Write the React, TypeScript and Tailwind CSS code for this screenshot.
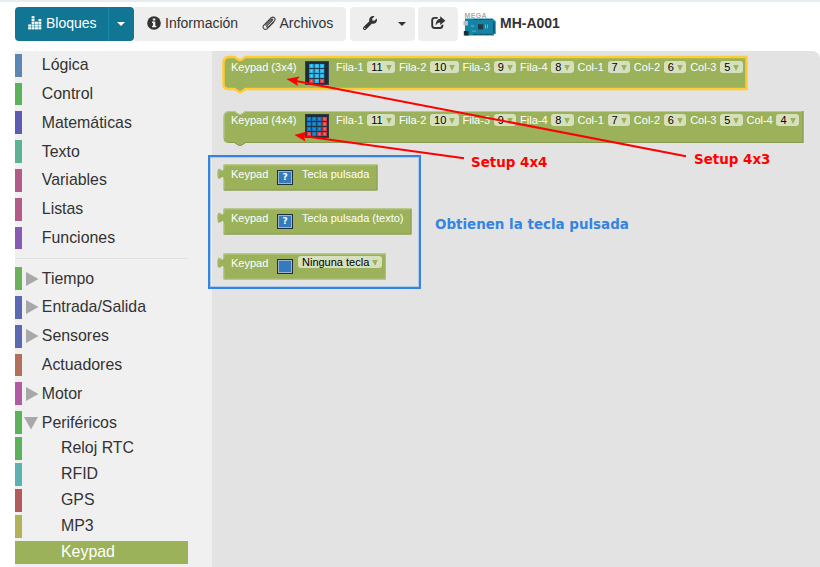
import React from "react";
import { FaWrench } from "react-icons/fa";

type Category = { name: string; color: string; arrow?: "right" | "down" };

const basics: Category[] = [
  { name: "Lógica", color: "#5b87b2" },
  { name: "Control", color: "#5bb25b" },
  { name: "Matemáticas", color: "#5b5bb2" },
  { name: "Texto", color: "#5bb296" },
  { name: "Variables", color: "#b25b87" },
  { name: "Listas", color: "#b25b87" },
  { name: "Funciones", color: "#875bb2" },
];

const devices: Category[] = [
  { name: "Tiempo", color: "#69b25b", arrow: "right" },
  { name: "Entrada/Salida", color: "#5b69b2", arrow: "right" },
  { name: "Sensores", color: "#5b69b2", arrow: "right" },
  { name: "Actuadores", color: "#b2705b" },
  { name: "Motor", color: "#b25ba3", arrow: "right" },
  { name: "Periféricos", color: "#5bb25b", arrow: "down" },
];

const peripherals: Category[] = [
  { name: "Reloj RTC", color: "#5bb25b" },
  { name: "RFID", color: "#5bb2b2" },
  { name: "GPS", color: "#b25b5b" },
  { name: "MP3", color: "#b2b25b" },
];

const pins: [string, string][] = [
  ["Fila-1", "11"],
  ["Fila-2", "10"],
  ["Fila-3", "9"],
  ["Fila-4", "8"],
  ["Col-1", "7"],
  ["Col-2", "6"],
  ["Col-3", "5"],
  ["Col-4", "4"],
];

function CategoryRow({ item }: { item: Category }) {
  return (
    <div className="mb-[6px] flex h-[22.8px] items-center">
      <span className="h-full w-[7px]" style={{ backgroundColor: item.color }} />
      <span className="flex w-[19.8px] justify-start pl-[2px]">
        {item.arrow === "right" && (
          <svg width="14" height="14" viewBox="0 0 14 14" className="ml-[2px]"><path d="M0 0L12.5 7L0 14Z" fill="#a8a8a8" /></svg>
        )}
        {item.arrow === "down" && (
          <svg width="14" height="14" viewBox="0 0 14 14"><path d="M0 1H14L7 13.5Z" fill="#a8a8a8" /></svg>
        )}
      </span>
      <span className="leading-[22px]">{item.name}</span>
    </div>
  );
}

function SubRow({ item }: { item: Category }) {
  return (
    <div className="mb-[3.2px] flex h-[22.8px] items-center">
      <span className="h-full w-[7px]" style={{ backgroundColor: item.color }} />
      <span className="pl-[39px] leading-[22px]">{item.name}</span>
    </div>
  );
}

function Caret({ light = false }: { light?: boolean }) {
  return (
    <svg width="8" height="4" viewBox="0 0 8 4"><path d="M0 0H8L4 4Z" fill={light ? "#fff" : "#333"} /></svg>
  );
}

function StatsIcon() {
  const levels = [2, 5, 3, 4];
  return (
    <svg width="14" height="14" viewBox="0 0 14 14" fill="#fff">
      {levels.map((n, c) =>
        Array.from({ length: n }, (_, r) => (
          <rect key={`${c}-${r}`} x={0.2 + c * 3.4} y={11.2 - r * 2.75} width="2.9" height="2.2" />
        ))
      )}
    </svg>
  );
}

function InfoIcon() {
  return (
    <svg width="14" height="14" viewBox="0 0 14 14">
      <circle cx="7" cy="7" r="6.8" fill="#333" />
      <path d="M5.8 2.5H8.3V4.5H5.8ZM5 5.6H8.3V9.8H9.3V11.3H5V9.8H6V7H5Z" fill="#eee" />
    </svg>
  );
}

function ClipIcon() {
  return (
    <svg width="15" height="15" viewBox="0 0 15 15" fill="none" stroke="#444" strokeWidth="1.15" strokeLinecap="round">
      <path d="M9.6 5L5 9.6C4.1 10.6 5.4 11.8 6.4 10.8L12.2 5.2C14.6 2.9 11.6 -.3 9.1 2L2.1 8.8C-.6 11.6 2.8 15 5.6 12.4L11.6 6.4" />
      <path d="M9.6 5C10.3 4.3 11 3.6 10.6 3.2C10 2.6 9.3 3.2 8.6 3.9L3.6 8.9" />
    </svg>
  );
}

function ShareIcon() {
  return (
    <svg width="15" height="14" viewBox="0 0 15 14">
      <path d="M6.7 1.9H3.6Q1.2 1.9 1.2 4.2V9.6Q1.2 12 3.6 12H9Q11.4 12 11.4 9.6V8.8" fill="none" stroke="#333" strokeWidth="1.9" />
      <path d="M9.2 .2L14.4 4.7L9.2 9V6.5Q6.2 6.4 4.7 9.5Q4.7 3.2 9.2 2.8Z" fill="#333" />
    </svg>
  );
}

function BoardIcon() {
  return (
    <svg width="34" height="26" viewBox="0 0 34 26" className="-mt-px">
      <text x="1.5" y="7" fontFamily="Liberation Sans, sans-serif" fontSize="7" fontWeight="bold" fill="#aaa" textLength="22">MEGA</text>
      <path d="M2 7.5H30L31 9L32.7 10V23H31V24.5H2Z" fill="#1583a5" />
      <path d="M10 8.5H29M10 23.4H29" stroke="#14586f" strokeWidth="1.2" strokeDasharray="5 .7" />
      <rect x="30" y="11" width="1.6" height="11" fill="#145268" />
      <rect x="0.5" y="10" width="4.5" height="4.5" fill="#b8bec0" />
      <rect x="0.8" y="20" width="4.8" height="4.5" fill="#183037" />
      <rect x="15" y="13.2" width="5.2" height="5.2" fill="#263a40" />
      <rect x="8" y="14" width="3" height="2" fill="#3ca4bb" />
      <path d="M22.5 13.5V17.5M24.5 13.5V17.5" stroke="#7cc4d6" strokeWidth=".8" />
      <rect x="9" y="19.5" width="4" height="1.2" fill="#4aabc0" />
    </svg>
  );
}

function KeypadIcon({ columns }: { columns: 3 | 4 }) {
  return (
    <svg width="24" height="24" viewBox="0 0 24 24" className="shrink-0">
      <rect width="24" height="24" fill={columns === 3 ? "#2f4350" : "#333842"} />
      <rect x="1.2" y="1.2" width="21.6" height="21.6" fill="#1b2a35" />
      {Array.from({ length: 4 * columns }, (_, i) => {
        const c = i % columns;
        const r = Math.floor(i / columns);
        const red = columns === 3 ? r === 3 && c !== 1 : c === 3 || (r === 3 && c !== 1);
        const x = columns === 3 ? 4.2 + c * 5.3 : 1.8 + c * 5.2;
        const y = 2.9 + r * 5;
        const core = red ? "#f1898d" : columns === 3 ? "#7ed5f2" : "#3f9bd0";
        return (
          <g key={i}>
            <rect x={x} y={y} width="4.5" height="4.2" fill={red ? "#e23d45" : columns === 3 ? "#23b4ec" : "#1476b8"} />
            <rect x={x + 1.5} y={y + 1.3} width="1.5" height="1.5" fill={core} />
          </g>
        );
      })}
    </svg>
  );
}

function KeyIcon({ question = false }: { question?: boolean }) {
  return (
    <span className="flex h-[15px] w-4 shrink-0 items-center justify-center border-[1.5px] border-[#222d38] bg-[#9db6cf] p-px">
      <span className="flex h-full w-full items-center justify-center bg-[#357abd] font-['DejaVu_Sans'] text-[9px] leading-none font-bold text-white">
        {question ? "?" : ""}
      </span>
    </span>
  );
}

function Dropdown({ value }: { value: string }) {
  return (
    <span className="-mt-px flex h-3 items-center gap-[3px] rounded-[3px] bg-[#d7e0be] pr-[3.5px] pl-1 text-black">
      <span className="pt-px">{value}</span>
      <svg width="6" height="6" viewBox="0 0 6 6" className="mt-px"><path d="M.2 0H5.8L3 6Z" fill="#9bb25b" /></svg>
    </span>
  );
}

function SetupBlock({ columns }: { columns: 3 | 4 }) {
  const selected = columns === 3;
  const right = selected ? 524.5 : 581.5;
  const outline = `M1.5 8Q1.5 2 7.5 2H12.5L17 5H19L23.5 2H${right}V34H23.5L19 37H17L12.5 34H6.5Q1.5 34 1.5 29Z`;
  return (
    <div className={selected ? "absolute top-[55px] left-[222px] h-[39px] w-[528px]" : "absolute top-[109px] left-[222px] h-[39px] w-[586px]"}>
      <svg className="absolute inset-0" width={right + 3} height="39">
        <path d={outline} fill="#9bb25b" stroke={selected ? "#fc3" : "none"} strokeWidth="2.5" />
        {!selected && (
          <path d={`M2 29V8Q2 2.5 7.5 2.5H12.5L17 5.5H19L23.5 2.5H${right - 1}`} fill="none" stroke="#b9c98c" />
        )}
        {!selected && <path d={`M${right - 0.5} 2V33.5H23.5L19 36.5H17L12.5 33.5H6.5`} fill="none" stroke="#87994f" />}
      </svg>
      <div className={selected ? "relative flex items-start gap-[3.7px] pt-[6px] pl-[9px]" : "relative flex items-start gap-[3.7px] pt-[5px] pl-[9px]"}>
        <span className="w-[70px] leading-[13px]">Keypad ({columns === 3 ? "3x4" : "4x4"})</span>
        <span className="mr-[3.7px]"><KeypadIcon columns={columns} /></span>
        {pins.slice(0, selected ? 7 : 8).map(([label, value]) => (
          <span key={label} className="flex h-[13px] items-center gap-[3.7px]">
            <span>{label}</span>
            <Dropdown value={value} />
          </span>
        ))}
      </div>
    </div>
  );
}

function ValueBlock({ width, label, top, field }: { width: number; label: string; top: number; field?: boolean }) {
  return (
    <div className="absolute left-[217px] h-[28px]" style={{ top, width: width + 8 }}>
      <svg className="absolute inset-0" width={width + 8} height="28">
        <path d={`M6.5 .5V4.2C6.5 11.7 .5 -1.8 .5 9.8S6.5 7.9 6.5 15.4V26.5H${width + 6}V.5Z`} fill="#9bb25b" />
        <path d={`M7 26V15.5M1 12C.5 9 .7 6 3 6Q6.8 7.5 7 4V1H${width + 5.5}`} fill="none" stroke="#b5c681" />
        <path d={`M${width + 5.5} 1V26H7`} fill="none" stroke={field ? "#b0bf80" : "#889b51"} />
      </svg>
      <div className="relative flex items-start pt-[4px] pl-[14px]">
        <span className="w-[46px] leading-[13px]">Keypad</span>
        <span className="pt-[2px]"><KeyIcon question={!field} /></span>
        <span className={field ? "ml-[5px] whitespace-nowrap" : "ml-[9px] leading-[13px] whitespace-nowrap"}>
          {field ? <Dropdown value={label} /> : label}
        </span>
      </div>
    </div>
  );
}

export default function App() {
  return (
    <div className="relative flex h-[567px] w-[820px] flex-col overflow-hidden bg-white font-['Liberation_Sans',Arial,sans-serif] text-[#333]">
      <header className="flex h-[51px] shrink-0 items-start border-t-2 border-[#e6eef1] pt-[5px] pl-[15px] text-[14px]">
        <div className="flex h-[34px] w-[119px] shrink-0 rounded bg-[#117594] text-white">
          <button className="flex w-[94px] items-center gap-[4px] border-r border-[#1688aa] pb-[2px] pl-[13px]">
            <StatsIcon />
            Bloques
          </button>
          <button className="flex w-[24px] items-center justify-center"><Caret light /></button>
        </div>
        <div className="flex h-[34px] w-[212px] shrink-0 items-center rounded-r bg-[#eee] pb-[2px] pl-[13px]">
          <InfoIcon />
          <span className="ml-1 w-[97px]">Información</span>
          <ClipIcon />
          <span className="ml-[2.5px]">Archivos</span>
        </div>
        <div className="ml-1 flex h-[34px] w-[65px] shrink-0 items-center rounded bg-[#eee] pl-[13px]">
          <FaWrench size={14} color="#333" className="mb-[3px]" />
          <span className="ml-[21px]"><Caret /></span>
        </div>
        <div className="ml-[3px] flex h-[34px] w-10 shrink-0 items-center justify-center rounded bg-[#eee] pb-[3px]"><ShareIcon /></div>
        <div className="ml-[5px] flex h-[34px] items-center gap-[3px]">
          <BoardIcon />
          <span className="pb-[2px] font-bold">MH-A001</span>
        </div>
      </header>

      <main className="flex h-[516px] pl-[15px]">
        <aside className="w-[197px] shrink-0 bg-[#f0f0f0] pt-[2.85px] text-[15.9px]">
          {basics.map((item) => <CategoryRow key={item.name} item={item} />)}
          <div className="mt-[8.55px] mb-[8.2px] h-px w-[173px] bg-[#e2e2e2]" />
          {devices.map((item) => <CategoryRow key={item.name} item={item} />)}
          <div className="-mt-[3.2px]">
            {peripherals.map((item) => <SubRow key={item.name} item={item} />)}
            <div className="h-[23px] w-[173px] bg-[#9bb25b] pl-[46px] leading-[22px] text-white">Keypad</div>
          </div>
        </aside>
        <section className="flex-1 rounded-tr-lg bg-[#e3e3e3] text-[11px] leading-[13px] text-white">
          <SetupBlock columns={3} />
          <SetupBlock columns={4} />
          <ValueBlock top={164} width={154.5} label="Tecla pulsada" />
          <ValueBlock top={208} width={188.5} label="Tecla pulsada (texto)" />
          <ValueBlock top={253} width={163} label="Ninguna tecla" field />
        </section>
      </main>

      <div className="absolute top-[155px] left-[208px] h-[134px] w-[213px] border-2 border-[#3584e4] shadow-[inset_0_0_0_1px_#b0caea]" />
      <svg className="absolute inset-0" width="820" height="567" fill="none" stroke="#f00" strokeWidth="2">
        <path d="M686 156.2L296 81M464 158.2L303 136" />
        <g fill="#f00" stroke="none">
          <path d="M286.5 79L299.5 76.5L296.5 81L298 86Z" />
          <path d="M294.5 135L307 131.5L304 136L305.5 141.5Z" />
        </g>
      </svg>
      <span className="absolute top-[155px] left-[471px] font-['DejaVu_Sans'] text-[13.45px] leading-4 font-bold text-[#f00]">Setup 4x4</span>
      <span className="absolute top-[152px] left-[694px] font-['DejaVu_Sans'] text-[13.45px] leading-4 font-bold text-[#f00]">Setup 4x3</span>
      <span className="absolute top-[217px] left-[435px] font-['DejaVu_Sans'] text-[13.45px] leading-4 font-bold whitespace-nowrap text-[#3584e4]">Obtienen la tecla pulsada</span>
    </div>
  );
}
